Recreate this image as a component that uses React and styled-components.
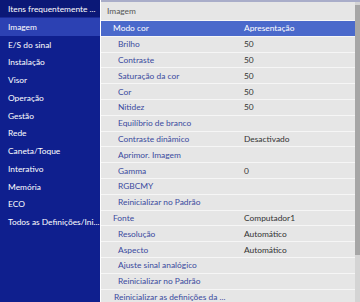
import styled, { createGlobalStyle } from "styled-components";

const Global = createGlobalStyle`
  html, body {
    margin: 0;
    padding: 0;
    background: #ffffff;
  }
  body {
    font-family: Lato, "Noto Sans", sans-serif;
    font-size: 8.4px;
  }
`;

const Screen = styled.div`
  width: 360px;
  height: 302px;
  display: flex;
  overflow: hidden;
  background: #ffffff;
`;

const SideNav = styled.nav`
  width: 100px;
  height: 100%;
  background-color: #0f1f8e;
  margin-right: 1px;
  display: flex;
  flex-direction: column;
  flex-shrink: 0;
`;

const NavItem = styled.div`
  height: 17.75px;
  line-height: 18.5px;
  padding: 0 2px 0 8px;
  color: #ffffff;
  white-space: nowrap;
  overflow: hidden;
  background-color: ${(p) =>
    p.$active ? "#2c41b3" : p.$top ? "#0b1877" : "transparent"};
  border-bottom: ${(p) => (p.$top ? "1px solid #1a2a98" : "none")};
  box-sizing: border-box;
`;

const Panel = styled.section`
  flex: 1;
  height: 100%;
  display: flex;
  background: #e6e6e6;
  border-top: 2px solid #a9adc9;
  box-sizing: border-box;
`;

const List = styled.div`
  flex: 1;
  display: flex;
  flex-direction: column;
`;

const Header = styled.div`
  height: 18px;
  line-height: 18px;
  padding-left: 6px;
  color: #555555;
  border-bottom: 1px solid #f6f6f6;
  flex-shrink: 0;
`;

const Row = styled.div`
  height: 14.8px;
  flex-shrink: 0;
  display: grid;
  grid-template-columns: 143px 1fr;
  align-items: center;
  border-bottom: 1px solid #f6f6f6;
  background-color: ${(p) => (p.$selected ? "#4a69cb" : "transparent")};
  white-space: nowrap;
`;

const Label = styled.span`
  grid-column: ${(p) => (p.$wide ? "1 / span 2" : "auto")};
  padding-left: ${(p) => p.$indent}px;
  color: ${(p) => (p.$selected ? "#ffffff" : "#3a4a9e")};
`;

const Value = styled.span`
  color: ${(p) => (p.$selected ? "#ffffff" : "#333333")};
`;

const Scrollbar = styled.div`
  width: 5px;
  display: flex;
  flex-direction: column;
  background: #d4d4d4;
  padding-top: 3px;
  box-sizing: border-box;
`;

const Thumb = styled.div`
  height: 250px;
  background: #a6a6a6;
`;

const navItems = [
  "Itens frequentemente ...",
  "Imagem",
  "E/S do sinal",
  "Instalação",
  "Visor",
  "Operação",
  "Gestão",
  "Rede",
  "Caneta/Toque",
  "Interativo",
  "Memória",
  "ECO",
  "Todos as Definições/Ini...",
];

const rows = [
  { label: "Modo cor", value: "Apresentação", indent: 12, selected: true },
  { label: "Brilho", value: "50", indent: 17 },
  { label: "Contraste", value: "50", indent: 17 },
  { label: "Saturação da cor", value: "50", indent: 17 },
  { label: "Cor", value: "50", indent: 17 },
  { label: "Nitidez", value: "50", indent: 17 },
  { label: "Equilíbrio de branco", indent: 17 },
  { label: "Contraste dinâmico", value: "Desactivado", indent: 17 },
  { label: "Aprimor. Imagem", indent: 17 },
  { label: "Gamma", value: "0", indent: 17 },
  { label: "RGBCMY", indent: 17 },
  { label: "Reinicializar no Padrão", indent: 17 },
  { label: "Fonte", value: "Computador1", indent: 12 },
  { label: "Resolução", value: "Automático", indent: 17 },
  { label: "Aspecto", value: "Automático", indent: 17 },
  { label: "Ajuste sinal analógico", indent: 17 },
  { label: "Reinicializar no Padrão", indent: 17 },
  { label: "Reinicializar as definições da ...", indent: 13, wide: true },
];

export default function App() {
  return (
    <>
      <Global />
      <Screen>
        <SideNav>
          {navItems.map((item, i) => (
            <NavItem key={item} $top={i === 0} $active={i === 1}>
              {item}
            </NavItem>
          ))}
        </SideNav>
        <Panel>
          <List>
            <Header>Imagem</Header>
            {rows.map((r, i) => (
              <Row key={i} $selected={r.selected}>
                <Label $indent={r.indent} $selected={r.selected} $wide={r.wide}>
                  {r.label}
                </Label>
                {!r.wide && <Value $selected={r.selected}>{r.value || ""}</Value>}
              </Row>
            ))}
          </List>
          <Scrollbar>
            <Thumb />
          </Scrollbar>
        </Panel>
      </Screen>
    </>
  );
}
